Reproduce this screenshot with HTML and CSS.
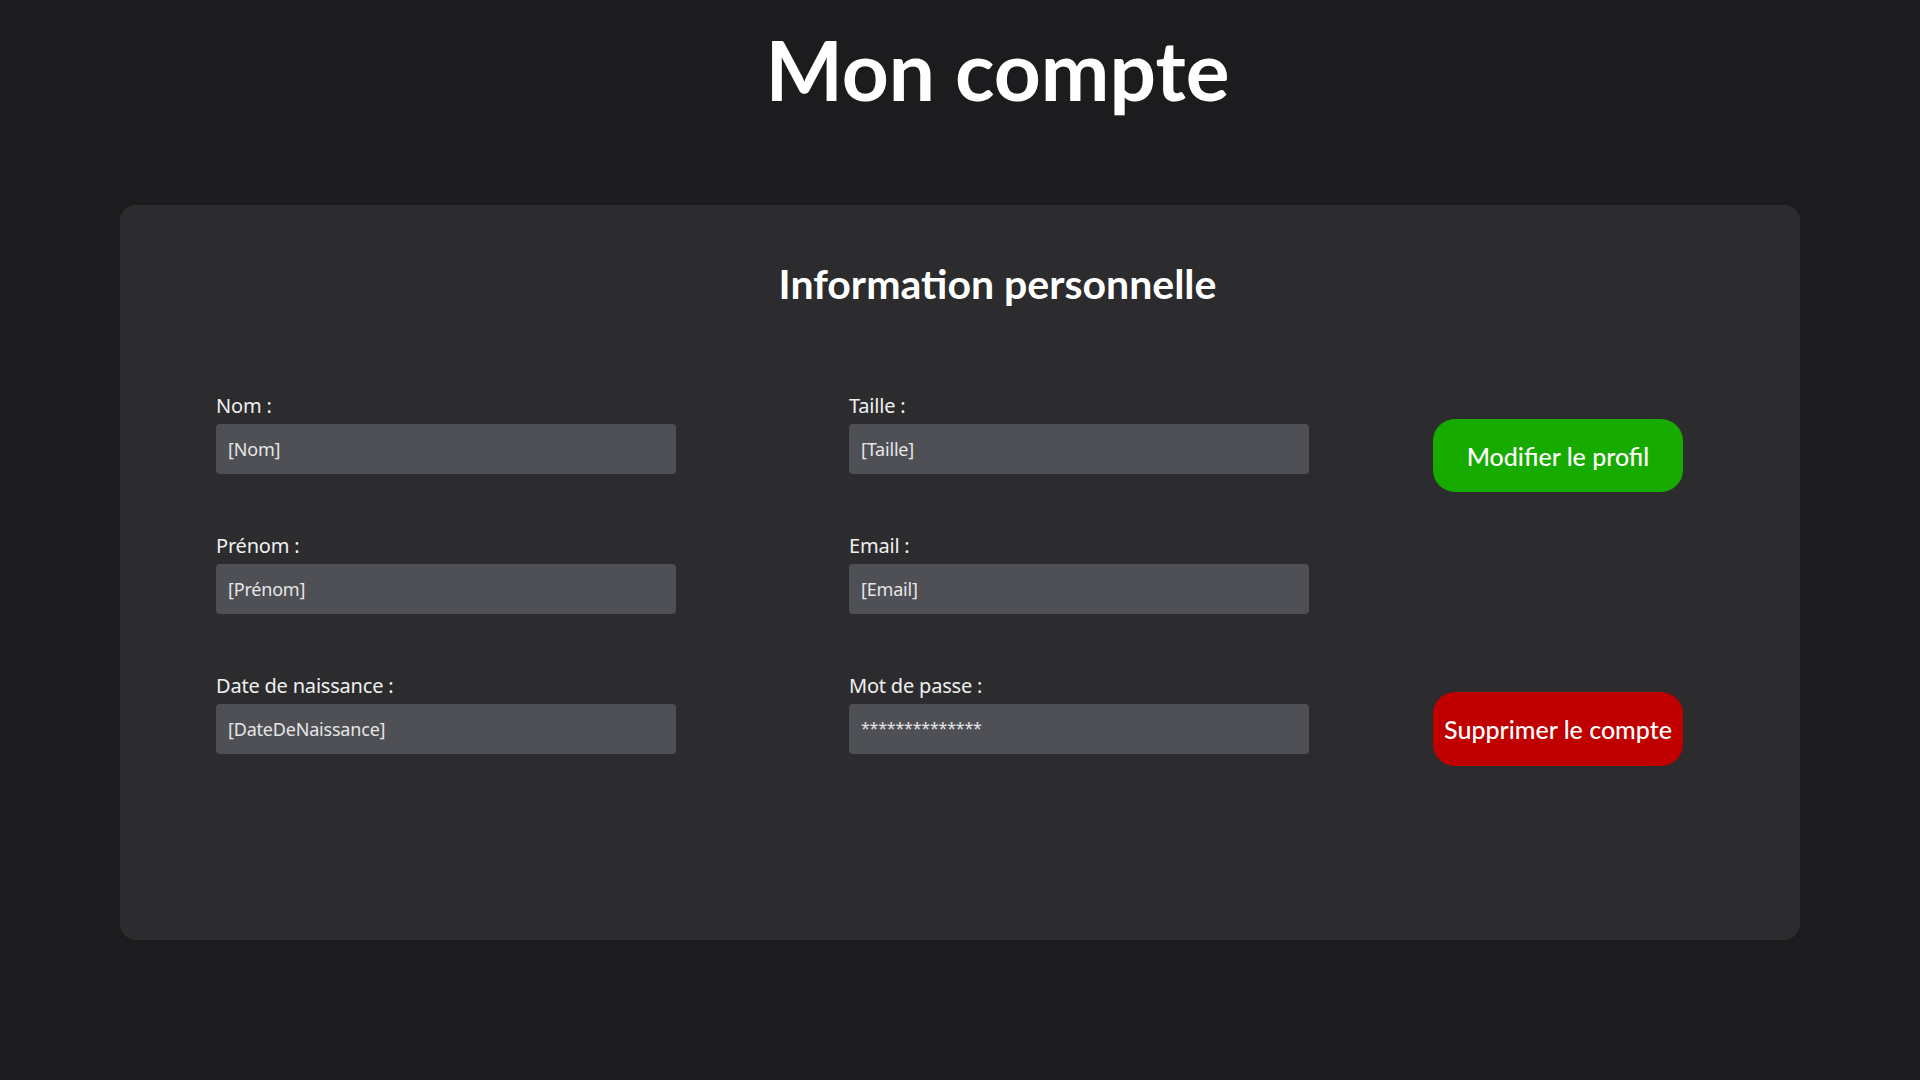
FILE: index.html
```html
<!DOCTYPE html>
<html lang="fr">
<head>
<meta charset="utf-8">
<title>Mon compte</title>
<link rel="stylesheet" href="styles.css">
</head>
<body>
<h1 class="page-title">Mon compte</h1>
<section class="card">
  <h2 class="card-title">Information personnelle</h2>
  <div class="grid">
    <div class="field">
      <label class="label">Nom :</label>
      <div class="input">[Nom]</div>
    </div>
    <div class="field">
      <label class="label">Taille :</label>
      <div class="input">[Taille]</div>
    </div>
    <button class="btn btn-edit">Modifier le profil</button>

    <div class="field">
      <label class="label">Prénom :</label>
      <div class="input">[Prénom]</div>
    </div>
    <div class="field">
      <label class="label">Email :</label>
      <div class="input">[Email]</div>
    </div>
    <div class="spacer"></div>

    <div class="field">
      <label class="label">Date de naissance :</label>
      <div class="input">[DateDeNaissance]</div>
    </div>
    <div class="field">
      <label class="label">Mot de passe :</label>
      <div class="input input-pass">**************</div>
    </div>
    <button class="btn btn-delete">Supprimer le compte</button>
  </div>
</section>
</body>
</html>
```
FILE: styles.css
```css
* { box-sizing: border-box; }
html, body {
  margin: 0;
  padding: 0;
  background: #1c1c1e;
  color: #ffffff;
}
body {
  width: 1920px;
  height: 1080px;
  overflow: hidden;
  font-family: "Noto Sans", "Open Sans", sans-serif;
}
.page-title {
  margin: 21px 0 0 0;
  padding-left: 75px;
  font-family: Lato, "Liberation Sans", sans-serif;
  font-weight: 700;
  font-size: 82px;
  line-height: 96px;
  text-align: center;
}
.card {
  margin: 88px 120px 0 120px;
  height: 735px;
  background: #2c2c2e;
  border-radius: 16px;
  padding: 55px 0 0 96px;
}
.card-title {
  margin: 0 0 0 -96px;
  padding-left: 75px;
  font-family: Lato, "Liberation Sans", sans-serif;
  font-weight: 700;
  font-size: 41px;
  line-height: 48px;
  text-align: center;
}
.grid {
  margin-top: 86px;
  display: grid;
  grid-template-columns: 633px 584px 250px;
  grid-template-rows: 80px 80px 80px;
  row-gap: 60px;
  align-items: start;
}
.field {
  display: flex;
  flex-direction: column;
  gap: 6px;
  width: 460px;
}
.label {
  font-size: 20px;
  line-height: 24px;
  color: #f0f0f0;
  letter-spacing: -0.2px;
}
.input {
  height: 50px;
  background: #4f5056;
  border-radius: 4px;
  padding: 0 12px;
  display: flex;
  align-items: center;
  font-size: 18px;
  color: #e6e6e6;
  letter-spacing: -0.2px;
}
.input-pass {
  font-size: 16px;
  padding-bottom: 2px;
}
.btn {
  width: 250px;
  height: 73px;
  border: none;
  border-radius: 22px;
  color: #ffffff;
  font-family: Lato, "Liberation Sans", sans-serif;
  font-size: 25px;
  font-weight: 500;
  padding: 0;
  white-space: nowrap;
}
.btn-edit {
  background: #17ab00;
  margin-top: 25px;
}
.btn-delete {
  background: #c00000;
  margin-top: 18px;
  height: 74px;
}
```
